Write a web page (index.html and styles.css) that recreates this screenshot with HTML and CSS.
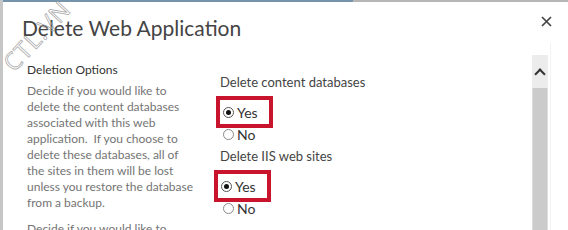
FILE: index.html
```html
<!DOCTYPE html>
<html>
<head>
<meta charset="utf-8">
<link rel="stylesheet" href="styles.css">
</head>
<body>
<div class="dialog">
  <div class="topbar"></div>
  <div class="header">
    <h1 class="title">Delete Web Application</h1>
    <svg class="close" width="11" height="11" viewBox="0 0 11 11"><path d="M1 1L10 10M10 1L1 10" stroke="#444" stroke-width="1.7" fill="none"/></svg>
  </div>
  <div class="body">
    <div class="main">
      <div class="left">
        <h2 class="section">Deletion Options</h2>
        <p class="desc">Decide if you would like to<br>delete the content databases<br>associated with this web<br>application.&nbsp; If you choose to<br>delete these databases, all of<br>the sites in them will be lost<br>unless you restore the database<br>from a backup.</p>
        <p class="desc">Decide if you would like to<br>delete the IIS web sites.</p>
      </div>
      <div class="right">
        <div class="label">Delete content databases</div>
        <div class="opt highlight"><span class="radio checked"></span>Yes</div>
        <div class="opt"><span class="radio"></span>No</div>
        <div class="label">Delete IIS web sites</div>
        <div class="opt highlight shift"><span class="radio checked"></span>Yes</div>
        <div class="opt"><span class="radio"></span>No</div>
      </div>
    </div>
    <div class="scrollbar">
      <div class="scroll-up"><span class="chev"></span></div>
      <div class="thumb"></div>
    </div>
    <div class="edge"></div>
  </div>
  <svg class="watermark" width="90" height="90" viewBox="0 0 90 90"><text x="10" y="76" transform="rotate(-47 10 76)">CTL.VN</text></svg>
</div>
</body>
</html>
```
FILE: styles.css
```css
html, body {
  margin: 0;
  padding: 0;
  background: #fff;
}
body {
  width: 568px;
  height: 230px;
  overflow: hidden;
  font-family: "Lato", "Open Sans", sans-serif;
}
.dialog {
  position: relative;
  height: 230px;
  border-left: 3px solid #c6c6c6;
  box-sizing: border-box;
  overflow: hidden;
}
.topbar {
  height: 2px;
  background: linear-gradient(to right, #7594ab 0, #7594ab 350px, #b5b5b5 350px);
}
.header {
  display: flex;
  justify-content: space-between;
  align-items: flex-start;
  padding: 11px 16px 0 19px;
}
.title {
  margin: 0;
  font-weight: 400;
  font-size: 21px;
  line-height: 30px;
  color: #444;
}
.close {
  margin-top: 3px;
}
.body {
  display: flex;
}
.main {
  flex: 1;
  display: flex;
}
.left {
  width: 175px;
  padding-left: 24px;
  padding-top: 18px;
}
.section {
  margin: 0;
  font-weight: 400;
  font-size: 12px;
  line-height: 18px;
  color: #333;
}
.desc {
  margin: 4px 0 10px;
  font-size: 12px;
  line-height: 16px;
  color: #747474;
  white-space: nowrap;
}
.right {
  padding-left: 18px;
  padding-top: 28px;
}
.label {
  font-size: 13px;
  line-height: 22px;
  color: #444;
}
.opt {
  display: flex;
  align-items: center;
  gap: 3px;
  font-size: 14px;
  color: #333;
  height: 21px;
  padding-left: 3px;
  width: 49px;
  box-sizing: border-box;
}
.highlight {
  height: 24px;
  margin-top: 7px;
  outline: 4px solid #c8142c;
}
.shift {
  margin-left: -2px;
}
.radio {
  width: 11px;
  height: 11px;
  border: 1px solid #8a8a8a;
  border-radius: 50%;
  box-sizing: border-box;
  position: relative;
  background: #fff;
  flex: none;
}
.radio.checked {
  border-color: #555;
}
.radio.checked::after {
  content: "";
  position: absolute;
  left: 2px;
  top: 2px;
  width: 5px;
  height: 5px;
  border-radius: 50%;
  background: #111;
}
.scrollbar {
  width: 16px;
  margin-top: 12px;
  display: flex;
  flex-direction: column;
  height: 180px;
}
.scroll-up {
  height: 33px;
  background: #ececec;
  display: flex;
  align-items: center;
  justify-content: center;
}
.chev {
  width: 6px;
  height: 6px;
  border-left: 2px solid #333;
  border-top: 2px solid #333;
  transform: rotate(45deg);
  margin-top: 4px;
}
.thumb {
  flex: 1;
  background: #cbcbcb;
  border-left: 1px solid #dedede;
  border-right: 1px solid #dedede;
}
.edge {
  width: 17px;
  border-left: 1px solid #f2f2f2;
  margin-left: 2px;
}
.watermark {
  position: absolute;
  left: 1px;
  top: -3px;
  pointer-events: none;
}
.watermark text {
  font-family: "Open Sans", sans-serif;
  font-size: 24px;
  letter-spacing: 1px;
  fill: none;
  stroke: #a4a4a4;
  stroke-width: 0.7px;
}
```
